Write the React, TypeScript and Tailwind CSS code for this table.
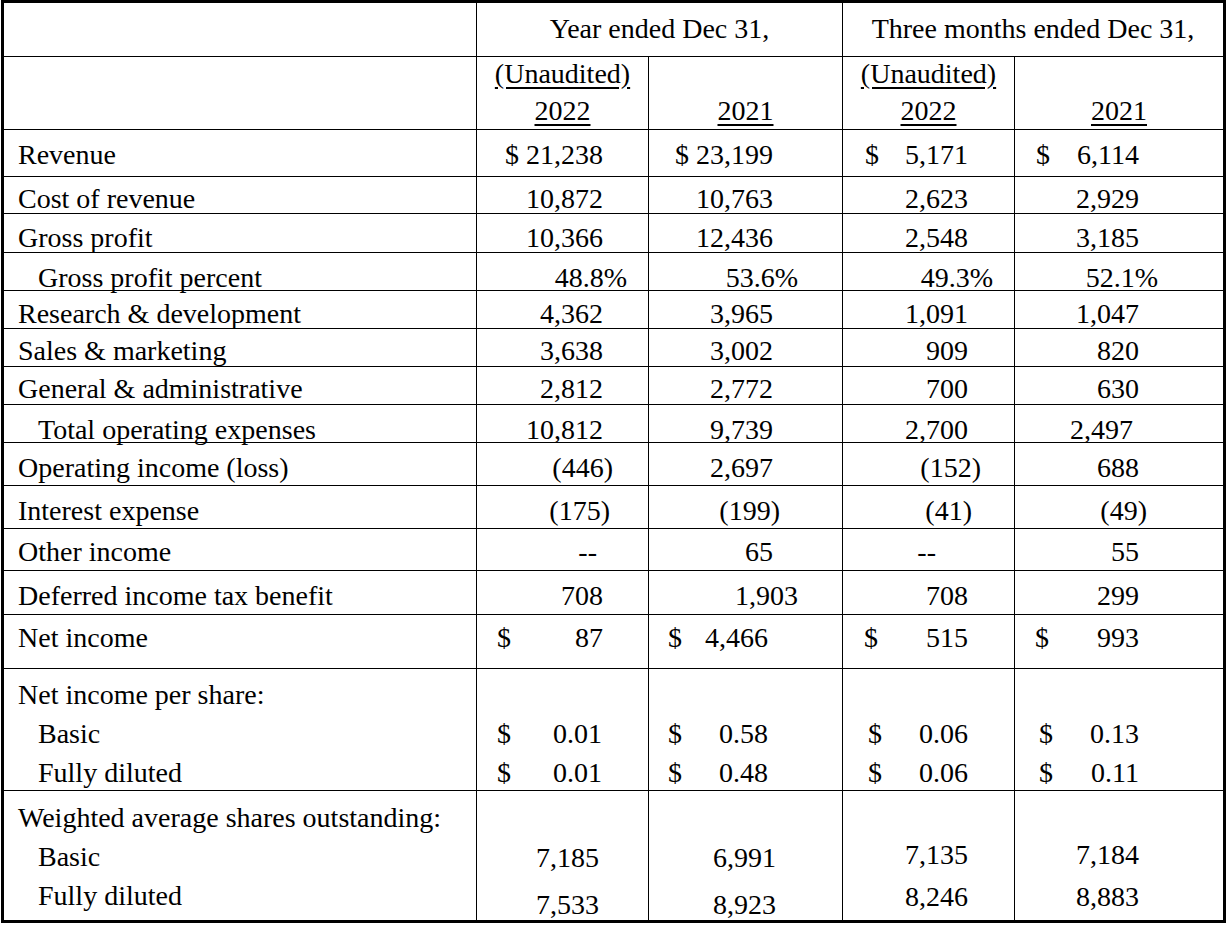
type V = { n: string; r?: string; d?: string };

type Row = {
	label: string;
	indent?: boolean;
	h: string;
	pt: string;
	vals: V[];
};

// column widths (incl. right border) and default right padding for numbers
const COLS = [
	"w-[172px] border-r border-black",
	"w-[194px] border-r border-black",
	"w-[172px] border-r border-black",
	"flex-1",
];
const PR = ["pr-[45px]", "pr-[69px]", "pr-[46px]", "pr-[84px]"];

const rows: Row[] = [
	{
		label: "Revenue",
		h: "h-[47px]",
		pt: "pt-[9px]",
		vals: [
			{ n: "$ 21,238" },
			{ n: "$ 23,199" },
			{ n: "5,171", d: "pl-[22px]" },
			{ n: "6,114", d: "pl-[21px]" },
		],
	},
	{
		label: "Cost of revenue",
		h: "h-[37px]",
		pt: "pt-[6px]",
		vals: [{ n: "10,872" }, { n: "10,763" }, { n: "2,623" }, { n: "2,929" }],
	},
	{
		label: "Gross profit",
		h: "h-[39px]",
		pt: "pt-[8px]",
		vals: [{ n: "10,366" }, { n: "12,436" }, { n: "2,548" }, { n: "3,185" }],
	},
	{
		label: "Gross profit percent",
		indent: true,
		h: "h-[38px]",
		pt: "pt-[9px]",
		vals: [
			{ n: "48.8%", r: "pr-[21px]" },
			{ n: "53.6%", r: "pr-[44px]" },
			{ n: "49.3%", r: "pr-[21px]" },
			{ n: "52.1%", r: "pr-[65px]" },
		],
	},
	{
		label: "Research & development",
		h: "h-[38px]",
		pt: "pt-[7px]",
		vals: [{ n: "4,362" }, { n: "3,965" }, { n: "1,091" }, { n: "1,047" }],
	},
	{
		label: "Sales & marketing",
		h: "h-[38px]",
		pt: "pt-[6px]",
		vals: [{ n: "3,638" }, { n: "3,002" }, { n: "909" }, { n: "820" }],
	},
	{
		label: "General & administrative",
		h: "h-[38px]",
		pt: "pt-[6px]",
		vals: [{ n: "2,812" }, { n: "2,772" }, { n: "700" }, { n: "630" }],
	},
	{
		label: "Total operating expenses",
		indent: true,
		h: "h-[38px]",
		pt: "pt-[9px]",
		vals: [
			{ n: "10,812" },
			{ n: "9,739" },
			{ n: "2,700" },
			{ n: "2,497", r: "pr-[90px]" },
		],
	},
	{
		label: "Operating income (loss)",
		h: "h-[43px]",
		pt: "pt-[9px]",
		vals: [
			{ n: "(446)", r: "pr-[35px]" },
			{ n: "2,697" },
			{ n: "(152)", r: "pr-[33px]" },
			{ n: "688" },
		],
	},
	{
		label: "Interest expense",
		h: "h-[43px]",
		pt: "pt-[9px]",
		vals: [
			{ n: "(175)", r: "pr-[38px]" },
			{ n: "(199)", r: "pr-[62px]" },
			{ n: "(41)", r: "pr-[42px]" },
			{ n: "(49)", r: "pr-[76px]" },
		],
	},
	{
		label: "Other income",
		h: "h-[42px]",
		pt: "pt-[7px]",
		vals: [
			{ n: "--", r: "pr-[51px]" },
			{ n: "65" },
			{ n: "--", r: "pr-[78px]" },
			{ n: "55" },
		],
	},
	{
		label: "Deferred income tax benefit",
		h: "h-[44px]",
		pt: "pt-[9px]",
		vals: [
			{ n: "708" },
			{ n: "1,903", r: "pr-[44px]" },
			{ n: "708" },
			{ n: "299" },
		],
	},
	{
		label: "Net income",
		h: "h-[54px]",
		pt: "pt-[7px]",
		vals: [
			{ n: "87", d: "pl-[20px]" },
			{ n: "4,466", d: "pl-[19px]", r: "pr-[74px]" },
			{ n: "515", d: "pl-[21px]" },
			{ n: "993", d: "pl-[20px]" },
		],
	},
];

// per share: [dollar padding, basic, diluted, right padding]
const perShare = [
	{ d: "pl-[20px]", b: "0.01", f: "0.01", r: "pr-[46px]" },
	{ d: "pl-[19px]", b: "0.58", f: "0.48", r: "pr-[74px]" },
	{ d: "pl-[25px]", b: "0.06", f: "0.06", r: "pr-[46px]" },
	{ d: "pl-[24px]", b: "0.13", f: "0.11", r: "pr-[84px]" },
];

const shares = [
	{ b: "7,185", f: "7,533", r: "pr-[49px]", pt: "pt-[51px]", gap: "mt-[15px]" },
	{ b: "6,991", f: "8,923", r: "pr-[66px]", pt: "pt-[51px]", gap: "mt-[15px]" },
	{ b: "7,135", f: "8,246", r: "pr-[46px]", pt: "pt-[48px]", gap: "mt-[10px]" },
	{ b: "7,184", f: "8,883", r: "pr-[84px]", pt: "pt-[48px]", gap: "mt-[10px]" },
];

function Value({ v, col }: { v: V; col: number }) {
	const pr = v.r ?? PR[col];
	if (v.d) {
		return (
			<div className={`flex justify-between ${v.d} ${pr}`}>
				<span>$</span>
				<span>{v.n}</span>
			</div>
		);
	}
	return <div className={`text-right ${pr}`}>{v.n}</div>;
}

function TableRow({ row }: { row: Row }) {
	return (
		<div className={`flex border-b border-black ${row.h}`}>
			<div
				className={`w-[473px] shrink-0 border-r border-black ${row.pt} ${
					row.indent ? "pl-[34px]" : "pl-[14px]"
				}`}
			>
				{row.label}
			</div>
			{row.vals.map((v, i) => (
				<div key={i} className={`${COLS[i]} shrink-0 ${row.pt}`}>
					<Value v={v} col={i} />
				</div>
			))}
		</div>
	);
}

export default function App() {
	return (
		<div className="bg-white min-h-screen">
			<div className="ml-[1px] w-[1225px] h-[923px] border-[3px] border-black text-black text-[28px] leading-[32px] whitespace-nowrap font-['Liberation_Serif','Times_New_Roman',serif]">
				{/* Header: periods */}
				<div className="flex h-[54px] border-b border-black">
					<div className="w-[473px] shrink-0 border-r border-black" />
					<div className="w-[366px] shrink-0 border-r border-black pt-[10px] text-center">
						Year ended Dec 31,
					</div>
					<div className="flex-1 pt-[10px] text-center">
						Three months ended Dec 31,
					</div>
				</div>

				{/* Header: years */}
				<div className="flex h-[73px] border-b border-black">
					<div className="w-[473px] shrink-0 border-r border-black" />
					<div className="w-[172px] shrink-0 border-r border-black pt-[1px] text-center">
						<div className="underline underline-offset-[4px]">(Unaudited)</div>
						<div className="mt-[5px] underline underline-offset-[4px]">2022</div>
					</div>
					<div className="w-[194px] shrink-0 border-r border-black pt-[38px] text-center">
						<span className="underline underline-offset-[4px]">2021</span>
					</div>
					<div className="w-[172px] shrink-0 border-r border-black pt-[1px] text-center">
						<div className="underline underline-offset-[4px]">(Unaudited)</div>
						<div className="mt-[5px] underline underline-offset-[4px]">2022</div>
					</div>
					<div className="flex-1 pt-[38px] text-center">
						<span className="underline underline-offset-[4px]">2021</span>
					</div>
				</div>

				{rows.map((row) => (
					<TableRow key={row.label} row={row} />
				))}

				{/* Net income per share */}
				<div className="flex h-[122px] border-b border-black leading-[39px]">
					<div className="w-[473px] shrink-0 border-r border-black pt-[6px] pl-[14px]">
						<div>Net income per share:</div>
						<div className="pl-[20px]">Basic</div>
						<div className="pl-[20px]">Fully diluted</div>
					</div>
					{perShare.map((p, i) => (
						<div key={i} className={`${COLS[i]} shrink-0 pt-[45px]`}>
							<div className={`flex justify-between ${p.d} ${p.r}`}>
								<span>$</span>
								<span>{p.b}</span>
							</div>
							<div className={`flex justify-between ${p.d} ${p.r}`}>
								<span>$</span>
								<span>{p.f}</span>
							</div>
						</div>
					))}
				</div>

				{/* Weighted average shares */}
				<div className="flex h-[129px]">
					<div className="w-[473px] shrink-0 border-r border-black pt-[7px] pl-[14px] leading-[39px]">
						<div>Weighted average shares outstanding:</div>
						<div className="pl-[20px]">Basic</div>
						<div className="pl-[20px]">Fully diluted</div>
					</div>
					{shares.map((s, i) => (
						<div key={i} className={`${COLS[i]} shrink-0 ${s.pt}`}>
							<div className={`text-right ${s.r}`}>{s.b}</div>
							<div className={`text-right ${s.r} ${s.gap}`}>{s.f}</div>
						</div>
					))}
				</div>
			</div>
		</div>
	);
}
